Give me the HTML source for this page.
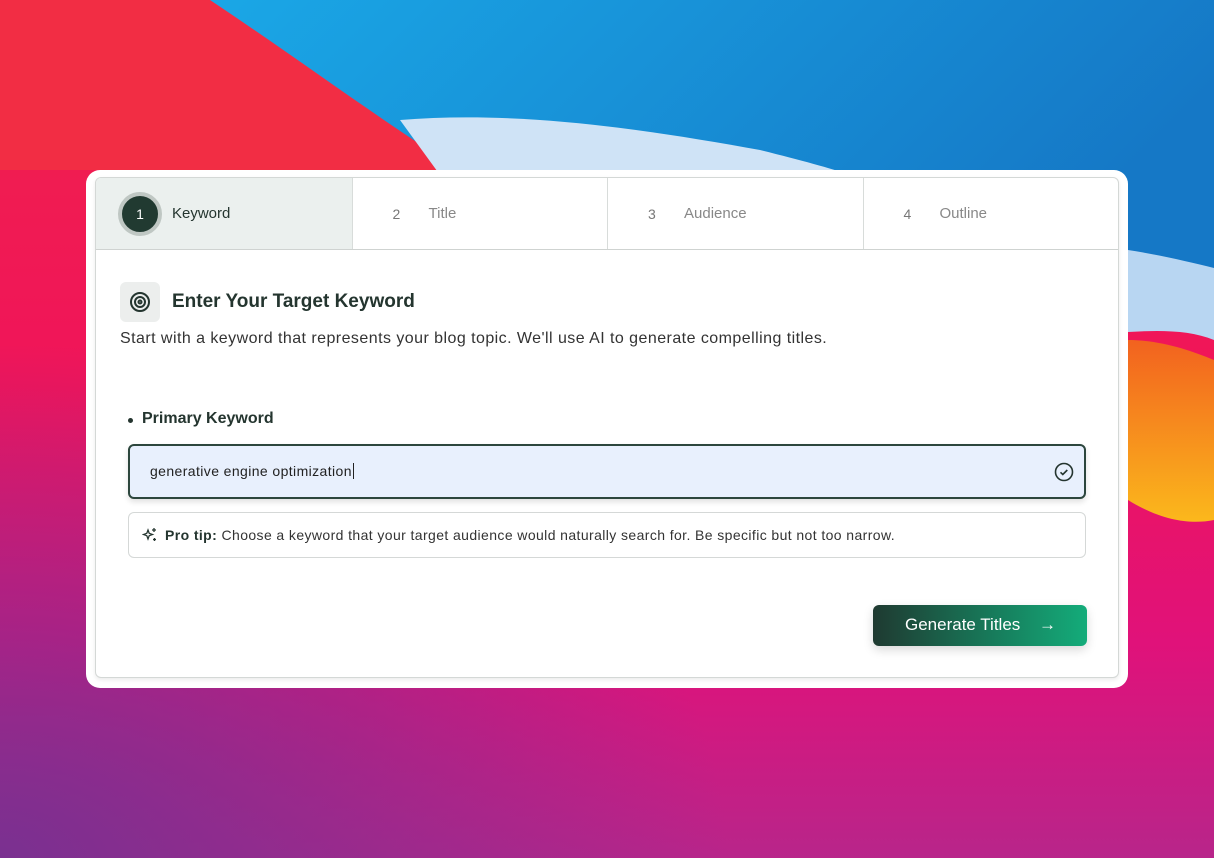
<!DOCTYPE html>
<html><head><meta charset="utf-8"><style>
*{box-sizing:border-box;margin:0;padding:0}
body{width:1214px;height:858px;overflow:hidden;position:relative;font-family:"Liberation Sans",sans-serif;}
#bg{position:absolute;left:0;top:0}
.frame{position:absolute;left:86px;top:170px;width:1042px;height:518px;background:#fff;border-radius:14px;}
.card{position:absolute;left:95px;top:177px;width:1024px;height:501px;border:1px solid #d4d8d6;border-radius:6px;background:#fff;box-shadow:0 2px 4px rgba(0,0,0,.08);overflow:hidden}
.tabs{display:flex;height:72px;border-bottom:1px solid #cfd3d1}
.tab{width:256px;display:flex;align-items:center;font-size:15px;color:#888;border-left:1px solid #d8dcda}
.tab:first-child{border-left:none;background:#ebf0ee}
.num{margin-left:40px;width:36px;color:#777;font-size:14px}
.circ{width:44px;height:44px;border-radius:50%;background:#213a31;border:4px solid #bfc7c3;color:#fff;display:flex;align-items:center;justify-content:center;margin-left:22px;margin-right:10px;font-size:14px}
.icon{position:absolute;left:24px;top:104px;width:40px;height:40px;background:#eceeed;border-radius:6px;display:flex;align-items:center;justify-content:center}
h1{position:absolute;left:76px;top:113px;font-size:19px;font-weight:bold;color:#24352f}
.sub{position:absolute;left:24px;top:152px;font-size:16px;letter-spacing:.45px;color:#333}
.lbl{position:absolute;left:32px;top:232px;font-size:16px;font-weight:bold;color:#24352f}
.lbl:before{content:"";position:absolute;left:0;top:8px;width:5px;height:5px;border-radius:50%;background:#24352f}
.inp{position:absolute;left:32px;top:266px;width:958px;height:55px;background:#e8f0fd;border:2px solid #2c463d;border-radius:6px;box-shadow:0 3px 6px rgba(0,0,0,.12);font-size:14px;letter-spacing:.4px;color:#222;padding:17px 0 0 20px}
.tip{position:absolute;left:32px;top:334px;width:958px;height:46px;border:1px solid #d5d8d7;border-radius:6px;font-size:14px;letter-spacing:.4px;color:#333;padding:14px 0 0 36px}
.btn{position:absolute;left:777px;top:427px;width:214px;height:41px;border-radius:6px;background:linear-gradient(90deg,#1f3a31,#177a5a 55%,#14ac7a);color:#fff;font-size:17px;padding:10px 0 0 32px;box-shadow:0 4px 10px rgba(0,0,0,.15)}
</style></head><body>
<svg id="bg" width="1214" height="858" viewBox="0 0 1214 858">
<defs>
<linearGradient id="pk" x1="0" y1="0" x2="0" y2="1"><stop offset="0" stop-color="#f0234a"/><stop offset=".45" stop-color="#f0145a"/><stop offset=".75" stop-color="#e0127a"/><stop offset="1" stop-color="#b8258a"/></linearGradient>
<linearGradient id="bl" x1="0" y1="0" x2="1" y2="0.3"><stop offset="0" stop-color="#1aa7e6"/><stop offset="1" stop-color="#1578c6"/></linearGradient>
<linearGradient id="or" x1="0" y1="0" x2="0" y2="1"><stop offset="0" stop-color="#f2621f"/><stop offset="1" stop-color="#fbb81c"/></linearGradient>
<radialGradient id="pu" cx="0" cy="1" r="0.6"><stop offset="0" stop-color="#7a3090"/><stop offset="1" stop-color="#7a3090" stop-opacity="0"/></radialGradient>
</defs>
<rect width="1214" height="858" fill="url(#pk)"/>
<rect width="1214" height="858" fill="url(#pu)"/>
<path d="M0 0H220C300 60 380 120 460 170H0Z" fill="#f22d44"/>
<path d="M210 0H1214V300C1150 260 1100 250 1000 220 900 190 820 170 700 165 600 160 500 170 460 170 380 120 300 60 210 0Z" fill="url(#bl)"/>
<path d="M400 120C520 110 650 130 760 150 800 160 830 168 850 175H440Z" fill="#cfe3f6"/>
<path d="M1128 250C1160 255 1190 262 1214 268V340C1190 330 1160 330 1128 332Z" fill="#b8d6f2"/>
<path d="M1128 340C1160 340 1190 350 1214 360V520C1190 525 1160 520 1128 500Z" fill="url(#or)"/>
</svg>
<div class="frame"></div>
<div class="card">
<div class="tabs">
<div class="tab"><div class="circ">1</div><span style="color:#24352f">Keyword</span></div>
<div class="tab"><span class="num">2</span>Title</div>
<div class="tab"><span class="num">3</span>Audience</div>
<div class="tab"><span class="num">4</span>Outline</div>
</div>
<div class="icon"><svg width="22" height="22" viewBox="0 0 22 22" fill="none" stroke="#24352f" stroke-width="2"><circle cx="11" cy="11" r="9"/><circle cx="11" cy="11" r="5"/><circle cx="11" cy="11" r="1.5"/></svg></div>
<h1>Enter Your Target Keyword</h1>
<div class="sub">Start with a keyword that represents your blog topic. We'll use AI to generate compelling titles.</div>
<div class="lbl"><span style="margin-left:14px">Primary Keyword</span></div>
<div class="inp">generative engine optimization<span style="border-left:1px solid #222;margin-left:1px"></span>
<svg style="position:absolute;right:10px;top:16px" width="20" height="20" viewBox="0 0 20 20" fill="none" stroke="#24352f" stroke-width="1.6"><circle cx="10" cy="10" r="8.5"/><path d="M6.5 10.3l2.3 2.2 4.5-4.5"/></svg></div>
<div class="tip"><svg style="position:absolute;left:13px;top:14px" width="16" height="16" viewBox="0 0 16 16" fill="none" stroke="#24352f" stroke-width="1.3"><path d="M6 3l1.2 3.3L10.5 7.5 7.2 8.7 6 12 4.8 8.7 1.5 7.5 4.8 6.3Z"/><path d="M12 1v4M10 3h4M12.5 11v3M11 12.5h3"/></svg><b style="color:#24352f">Pro tip:</b> Choose a keyword that your target audience would naturally search for. Be specific but not too narrow.</div>
<div class="btn">Generate Titles <span style="margin-left:14px">→</span></div>
</div>
</body></html>
